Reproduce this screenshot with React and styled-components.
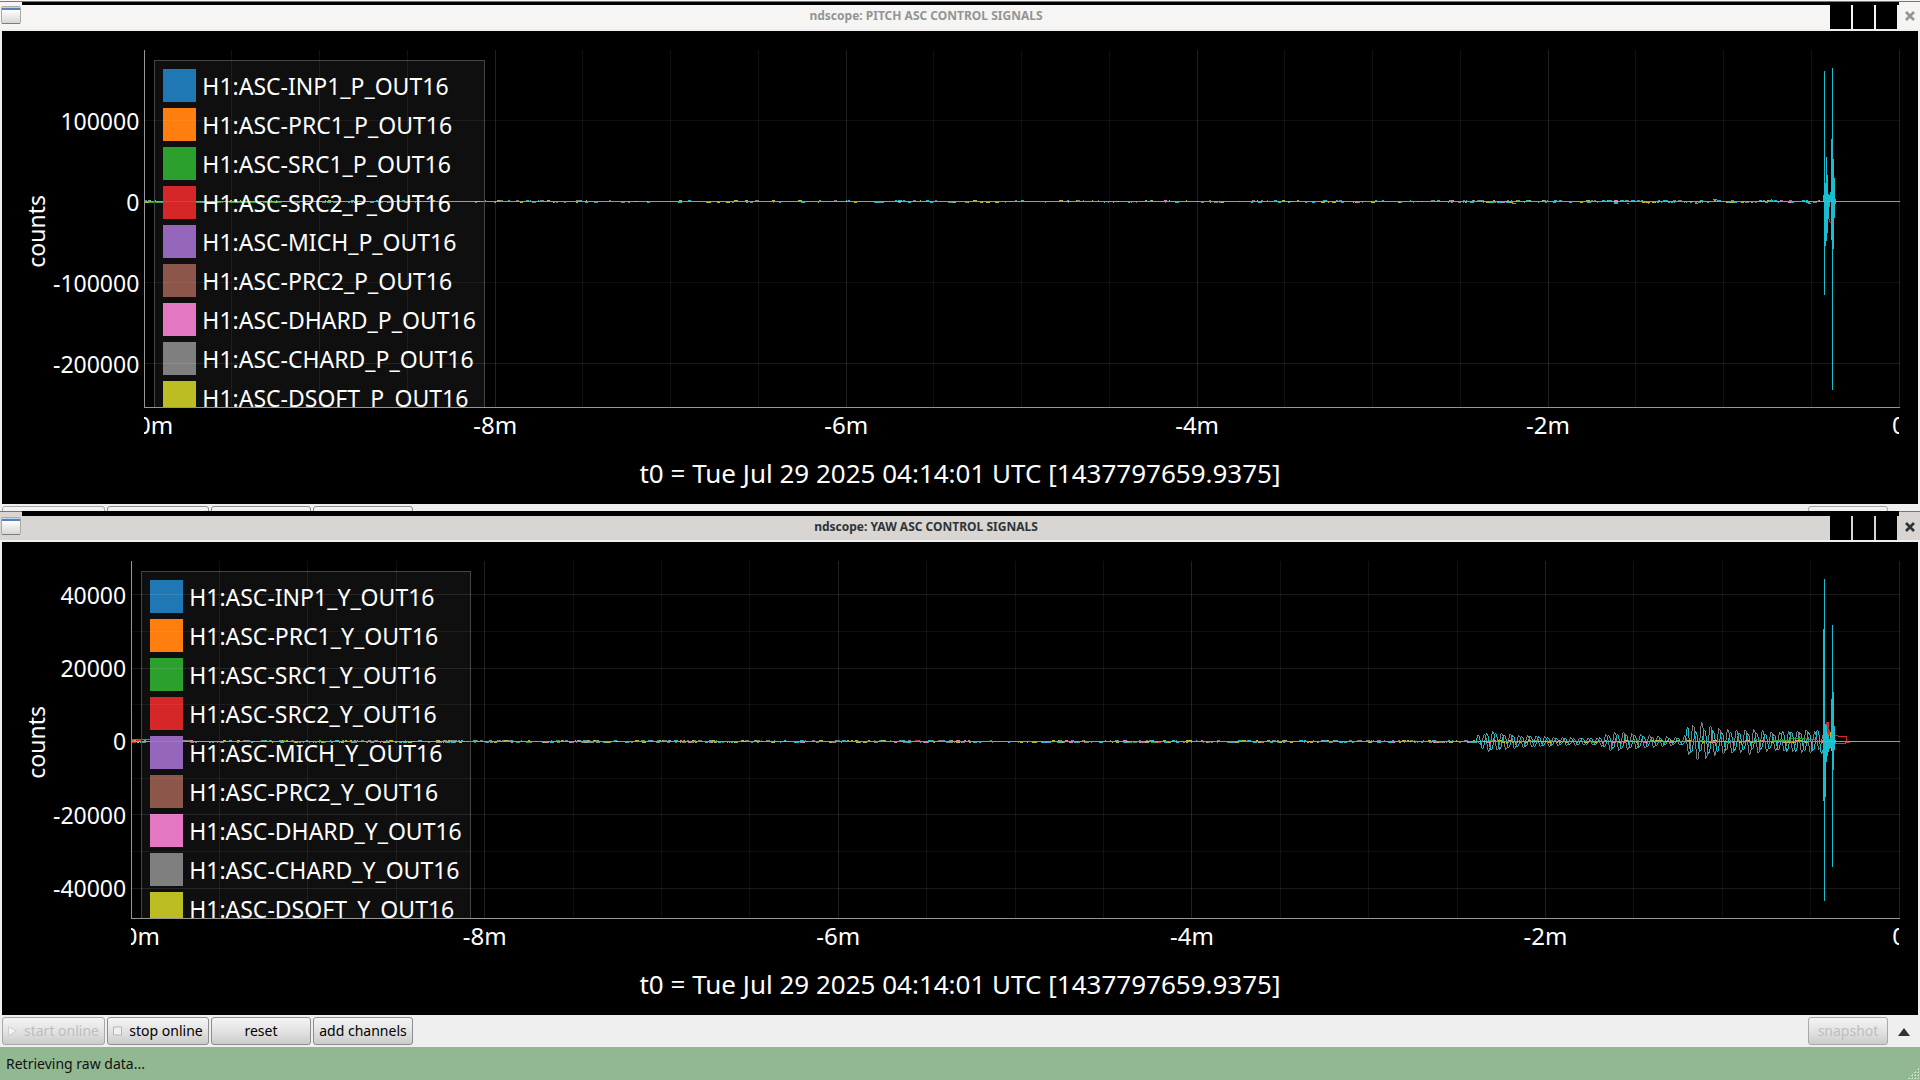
import React from 'react';
import styled, { createGlobalStyle, css } from 'styled-components';

const colors = {
  blue: '#1f77b4',
  orange: '#ff7f0e',
  green: '#2ca02c',
  red: '#d62728',
  purple: '#9467bd',
  brown: '#8c564b',
  pink: '#e377c2',
  gray: '#7f7f7f',
  olive: '#bcbd22',
  cyan: '#17becf',
};

const channels = [
  ['INP1', colors.blue],
  ['PRC1', colors.orange],
  ['SRC1', colors.green],
  ['SRC2', colors.red],
  ['MICH', colors.purple],
  ['PRC2', colors.brown],
  ['DHARD', colors.pink],
  ['CHARD', colors.gray],
  ['DSOFT', colors.olive],
];

const GlobalStyle = createGlobalStyle`
  * {
    box-sizing: border-box;
  }
  body {
    margin: 0;
    background: #000;
    font-family: 'Noto Sans', sans-serif;
  }
`;

const StyledDesktop = styled.main`
  display: flex;
  flex-direction: column;
  min-height: 100vh;
  overflow: hidden;
`;
const StyledWindow = styled.section`
  --bar: ${({ $active }) => ($active ? '#d9d5d2' : '#f6f5f4')};
  --ink: ${({ $active }) => ($active ? '#2e3436' : '#929595')};
  background: #efefef;
  ${({ $covered }) => $covered && css`margin-bottom: -58px;`};
  ${({ $active }) => $active && css`z-index: 1;`};
`;
const StyledStrip = styled.div`
  display: flex;
  height: 5px;
  ${({ $active }) => !$active && css`border-top: 1px solid #f6f5f4;`};
`;
const StyledCorner = styled.div`
  width: ${({ $width }) => $width}px;
  background: var(--bar);
  border-top: 1px solid #777;
`;
const StyledEdge = styled.div`
  flex: 1;
  background: #000;
  border-top: 1px solid ${({ $active }) => ($active ? '#000' : '#777')};
`;
const StyledTitleBar = styled.header`
  display: flex;
  align-items: stretch;
  height: 26px;
  background: var(--bar);
  border-bottom: 2px solid #efefef;
`;
const StyledWindowIcon = styled.svg`
  width: 20px;
  height: 18px;
  margin: 1px;
`;
const StyledTitle = styled.h1`
  flex: 1;
  margin: 0;
  color: var(--ink);
  font-size: 12px;
  font-weight: 700;
  line-height: 21px;
  text-align: center;
`;
const StyledWindowButtons = styled.div`
  display: flex;
  gap: 2px;
`;
const StyledWindowButton = styled.button`
  width: 21px;
  padding: 0;
  border: 0;
  background: ${({ $plain }) => ($plain ? 'none' : '#000')};
  svg {
    display: block;
    width: 10px;
    height: 10px;
    margin: 0 5px 3px 6px;
    stroke: var(--ink);
  }
`;
const StyledPlot = styled.div`
  display: grid;
  grid-template-columns: 51px auto 1fr;
  grid-template-rows: 1fr 33px 63px;
  height: calc((100vh - 134px) / 2);
  margin: 0 2px;
  padding: 19px 18px 0 0;
  background: #000;
  color: #fff;
  font-size: 23px;
  line-height: 33px;
`;
const StyledAxisName = styled.div`
  justify-self: end;
  align-self: center;
  margin-right: 5px;
  padding-bottom: 4px;
  writing-mode: vertical-rl;
  transform: rotate(180deg);
  line-height: 24px;
`;
const StyledYTicks = styled.div`
  display: grid;
  grid-template-rows: ${({ $rows }) => $rows};
  padding-right: 5px;
`;
const StyledYTick = styled.div`
  display: flex;
  align-items: center;
  justify-content: flex-end;
  align-self: end;
  height: 0;
`;
const StyledXTicks = styled.div`
  grid-column: 3;
  display: flex;
  justify-content: space-between;
  margin-right: 1px;
  overflow: hidden;
  font-size: 24px;
`;
const StyledXTick = styled.div`
  display: flex;
  justify-content: center;
  width: 0;
  white-space: nowrap;
`;
const StyledPlotTitle = styled.div`
  grid-column: 1 / -1;
  padding-left: 18px;
  padding-top: 14px;
  font-size: 26px;
  line-height: 36px;
  text-align: center;
`;
const StyledView = styled.div`
  display: grid;
  grid-template: minmax(0, 1fr) / minmax(0, 1fr);
  min-height: 0;
  overflow: hidden;
  border-left: 1px solid #969696;
  border-bottom: 1px solid #969696;
  > * {
    grid-area: 1 / 1;
  }
`;
const StyledCanvas = styled.svg`
  width: 100%;
  height: 100%;
  shape-rendering: crispEdges;
  pointer-events: none;
`;
const StyledLegend = styled.ul`
  justify-self: start;
  align-self: start;
  display: flex;
  flex-direction: column;
  gap: 6px;
  margin: 10px 9px;
  padding: 8px;
  list-style: none;
  white-space: nowrap;
  background: rgba(255, 255, 255, 0.06);
  border: 1px solid #444;
`;
const StyledLegendItem = styled.li`
  display: flex;
  gap: 6px;
  height: 33px;
  line-height: 35px;
`;
const StyledSwatch = styled.span`
  width: 33px;
  height: 33px;
  background: ${({ $color }) => $color};
`;
const StyledToolbar = styled.div`
  display: flex;
  align-items: center;
  gap: 2px;
  height: 32px;
  padding: 0 10px 0 2px;
`;
const StyledButton = styled.button`
  display: flex;
  align-items: center;
  justify-content: center;
  gap: 7px;
  width: ${({ $width }) => $width}px;
  height: 28px;
  padding: 0;
  border: 1px solid #8e8e8e;
  border-radius: 3px;
  background: linear-gradient(#f4f4f4, #e3e3e3 50%, #cbcbcb);
  color: #000;
  font-family: inherit;
  font-size: 14px;
  line-height: 20px;
  white-space: nowrap;
  &:disabled {
    border-color: #a8a8a8;
    color: #bebebe;
  }
  svg {
    width: 9px;
    height: 10px;
  }
`;
const StyledExpand = styled.button`
  width: 12px;
  height: 28px;
  margin-left: 8px;
  padding: 0;
  border: 0;
  background: none;
  svg {
    display: block;
    width: 12px;
    height: 8px;
    margin-top: 2px;
  }
`;
const StyledSpacer = styled.div`
  flex: 1;
`;
const StyledStatus = styled.footer`
  display: flex;
  align-items: center;
  justify-content: space-between;
  height: 33px;
  padding-left: 6px;
  background: #92b892;
  color: #111;
  font-size: 14px;
  line-height: 20px;
  svg {
    align-self: flex-end;
    width: 13px;
    height: 13px;
  }
`;

// small deterministic generator, so the traces look the same on every render
const random = seed => {
  let s = seed;
  return () => {
    s = (s * 16807) % 2147483647;
    return s / 2147483647;
  };
};

const lerp = (points, x) => {
  const i = points.findIndex(p => p[0] > x);
  if (i < 1) {
    return i === 0 ? points[0][1] : points[points.length - 1][1];
  }
  const [x0, y0] = points[i - 1];
  const [x1, y1] = points[i];
  return y0 + ((y1 - y0) * (x - x0)) / (x1 - x0);
};

// one pixel flecks just above and below the zero line
const noise = (seed, color, end, zero, density) => {
  const rnd = random(seed);
  let d = '';
  for (let x = 0; x < end; x += 1) {
    if (rnd() < density(x)) {
      const w = 1 + Math.floor(rnd() * 4);
      const r = rnd();
      const y = zero + (r < 0.35 ? -1 : r < 0.6 ? 0 : 1);
      d += `M${x} ${y}h${w}v1h-${w}z`;
      x += w;
    }
  }
  return { d, color };
};

const columns = (color, list) => ({
  color,
  d: list.map(([x, top, bottom]) => `M${x} ${top}h1V${bottom}h-1z`).join(''),
});

// every column spans from the previous sample to the current one
const wave = (color, start, end, zero, period, phase, envelope) => {
  const at = x => Math.round(zero - Math.sin(((x - start) / period) * 2 * Math.PI + phase) * lerp(envelope, x));
  const list = [];
  for (let x = start; x <= end; x += 1) {
    const from = at(x - 1);
    const to = at(x);
    list.push(from < to ? [x, from + 1, to + 1] : [x, to, Math.max(from, to + 1)]);
  }
  return columns(color, list);
};

const pitch = {
  letter: 'P',
  title: 'ndscope: PITCH ASC CONTROL SIGNALS',
  width: 1755,
  rows: '71fr 81fr 81fr 81fr 43fr',
  yTicks: ['100000', '0', '-100000', '-200000'],
  gridY: [[70, 1], [151, 2], [232, 1], [313, 2]],
  traces: [
    { color: colors.green, d: 'M0 151h18v2h-18zM50 152h26v1h-26zM84 152h30v1h-30zM118 152h18v1h-18z' },
    noise(11, colors.gray, 1680, 151, x => (x > 1300 ? 0.14 : 0.1)),
    noise(29, colors.pink, 1680, 151, x => (x > 1500 ? 0.02 : 0.003)),
    noise(47, colors.cyan, 1680, 151, x => (x > 1300 ? 0.3 : 0.09)),
    noise(53, colors.cyan, 1680, 150, x => (x > 1500 ? 0.06 : 0)),
    noise(71, colors.cyan, 1680, 152, x => (x > 1300 ? 0.05 : 0)),
    { color: colors.cyan, d: 'M0 151h1755v1h-1755z' },
    noise(83, colors.olive, 1680, 151, x => (x > 1300 ? 0.13 : 0.07)),
    { color: colors.red, d: 'M1684 169h1v3h-1zM1685 172h1v1h-1z' },
    columns(colors.cyan, [
      [1678, 145, 152], [1679, 21, 245], [1680, 133, 196], [1681, 107, 191], [1682, 125, 183],
      [1683, 144, 169], [1684, 145, 157], [1685, 142, 152], [1686, 89, 190], [1687, 18, 340],
      [1688, 109, 199], [1689, 128, 168], [1690, 149, 154],
    ]),
  ],
};

const yawEnd = 1692;
const yaw = {
  letter: 'Y',
  title: 'ndscope: YAW ASC CONTROL SIGNALS',
  width: 1768,
  rows: '34fr 73fr 73fr 74fr 73fr 30fr',
  yTicks: ['40000', '20000', '0', '-20000', '-40000'],
  gridY: [[33, 2], [70, 1], [107, 2], [143, 1], [180, 2], [217, 1], [253, 2], [290, 1], [327, 2]],
  traces: [
    { color: colors.green, d: 'M0 178h18v1h-18zM52 179h6v1h-6z' },
    { color: colors.red, d: 'M0 179h10v1h-10z' },
    noise(13, colors.gray, 1344, 180, () => 0.2),
    noise(31, colors.pink, 1344, 180, () => 0.06),
    noise(37, colors.red, 1344, 180, () => 0.01),
    noise(43, colors.green, 1344, 180, () => 0.05),
    noise(59, colors.olive, 1344, 180, () => 0.12),
    { color: colors.cyan, d: 'M0 180h1768v1h-1768z' },
    noise(61, colors.cyan, 1344, 180, () => 0.14),
    noise(97, colors.olive, 1344, 180, () => 0.04),
    noise(101, colors.gray, 1344, 180, () => 0.06),
    wave(colors.gray, 1346, yawEnd, 180, 8.7, 3.9, [
      [1346, 1], [1352, 8], [1358, 11], [1364, 9], [1390, 6], [1430, 4], [1465, 3], [1478, 9], [1490, 9],
      [1530, 5], [1550, 3], [1557, 15], [1567, 20], [1580, 14], [1605, 11], [1618, 13], [1640, 9],
      [1660, 10], [1675, 12], [1692, 6],
    ]),
    wave(colors.cyan, 1344, yawEnd, 180, 8.7, 0.6, [
      [1344, 6], [1360, 9], [1375, 6], [1400, 5], [1430, 3], [1465, 3], [1478, 7], [1495, 7], [1530, 3],
      [1552, 3], [1555, 17], [1560, 9], [1575, 12], [1590, 9], [1630, 8], [1640, 7], [1650, 10], [1680, 9],
      [1688, 13], [1692, 11],
    ]),
    noise(19, colors.pink, yawEnd, 180, x => (x > 1344 ? 0.12 : 0)),
    noise(67, colors.green, yawEnd, 180, x => (x > 1344 ? 0.1 : 0)),
    noise(73, colors.olive, yawEnd, 180, x => (x > 1344 ? 0.22 : 0)),
    { color: colors.green, d: 'M1640 179h18v-2h16v1h10v1h-10v-1h-16v2h-18z' },
    { color: colors.red, d: 'M1694 161h3v8h1v6h-4zM1703 174h3v1h9v6h3v1h-4v-6h-8v-1h-3z' },
    { color: colors.brown, d: 'M1703 182h10v-1h3v1h-2v1h-11z' },
    columns(colors.cyan, [
      [1691, 68, 240], [1692, 18, 340], [1693, 163, 236], [1694, 164, 201], [1695, 172, 195],
      [1696, 174, 191], [1697, 178, 188], [1698, 177, 187], [1699, 138, 190], [1700, 64, 306],
      [1701, 131, 209], [1702, 165, 189], [1703, 179, 182],
    ]),
    columns(colors.olive, [[1698, 171, 177], [1699, 186, 190]]),
  ],
};

const WindowIcon = () => (
  <StyledWindowIcon viewBox="0 0 20 18" aria-hidden="true">
    <defs>
      <linearGradient id="pane" x1="0" y1="0" x2="0" y2="1">
        <stop offset="0.2" stopColor="#ffffff" />
        <stop offset="1" stopColor="#d3d7cf" />
      </linearGradient>
    </defs>
    <rect x="0.5" y="0.5" width="19" height="17" rx="1" fill="url(#pane)" stroke="#a9aaa6" />
    <path d="M1 1h18v1H1z" fill="#c5d2e3" />
    <path d="M1 2h18v2H1z" fill="#5a7fb5" />
    <path d="M1 17h18v1H1z" fill="#7c7c7c" />
  </StyledWindowIcon>
);

const Scope = ({ letter, width, rows, yTicks, gridY, traces }) => (
  <StyledPlot>
    <StyledAxisName>counts</StyledAxisName>
    <StyledYTicks $rows={rows}>
      {yTicks.map(tick => (
        <StyledYTick key={tick}>{tick}</StyledYTick>
      ))}
    </StyledYTicks>
    <StyledView>
      <StyledCanvas viewBox={`0 0 ${width} 357`} preserveAspectRatio="none" aria-hidden="true">
        {traces.map(({ d, color }, i) => (
          <path key={i} d={d} fill={color} />
        ))}
      </StyledCanvas>
      <StyledLegend>
        {channels.map(([name, color]) => (
          <StyledLegendItem key={name}>
            <StyledSwatch $color={color} />
            {`H1:ASC-${name}_${letter}_OUT16`}
          </StyledLegendItem>
        ))}
      </StyledLegend>
      <StyledCanvas viewBox={`0 0 ${width} 357`} preserveAspectRatio="none" aria-hidden="true">
        {Array.from({ length: 20 }, (_, i) => (
          <rect
            key={i}
            x={Math.floor(((i + 1) * width) / 20) - 1}
            width="1"
            height="357"
            fill="#fff"
            opacity={(i + 1) % 4 ? 0.065 : 0.13}
          />
        ))}
        {gridY.map(([y, level]) => (
          <rect key={y} y={y} width={width} height="1" fill="#fff" opacity={level === 2 ? 0.1 : 0.06} />
        ))}
      </StyledCanvas>
    </StyledView>
    <StyledXTicks>
      {['-10m', '-8m', '-6m', '-4m', '-2m', '0'].map(tick => (
        <StyledXTick key={tick}>{tick}</StyledXTick>
      ))}
    </StyledXTicks>
    <StyledPlotTitle>t0 = Tue Jul 29 2025 04:14:01 UTC [1437797659.9375]</StyledPlotTitle>
  </StyledPlot>
);

const Toolbar = () => (
  <StyledToolbar>
    <StyledButton $width={103} disabled>
      <svg viewBox="0 0 9 10" aria-hidden="true">
        <path d="M0.5 0.5L8.5 5L0.5 9.5z" fill="#f3f3f3" stroke="#cfcfcf" />
      </svg>
      start online
    </StyledButton>
    <StyledButton $width={102}>
      <svg viewBox="0 0 9 10" aria-hidden="true">
        <path d="M0.5 1h8v8h-8z" fill="#f0f0ec" stroke="#b5b5b0" />
      </svg>
      stop online
    </StyledButton>
    <StyledButton $width={100}>reset</StyledButton>
    <StyledButton $width={100}>add channels</StyledButton>
    <StyledSpacer />
    <StyledButton $width={80} disabled>
      snapshot
    </StyledButton>
    <StyledExpand aria-label="expand">
      <svg viewBox="0 0 12 8">
        <path d="M6 0L12 8H0z" fill="#333" />
      </svg>
    </StyledExpand>
  </StyledToolbar>
);

const Grip = () => (
  <svg viewBox="0 0 13 13" aria-hidden="true">
    {[0, 1, 2, 3].map(row =>
      Array.from({ length: row + 1 }, (_, i) => (
        <g key={`${row}-${i}`}>
          <rect x={10 - i * 3} y={1 + row * 3} width="2" height="2" fill="#c9dcc9" />
          <rect x={10 - i * 3} y={1 + row * 3} width="1" height="1" fill="#7f9f7f" />
        </g>
      ))
    )}
  </svg>
);

const ScopeWindow = ({ scope, active, covered }) => (
  <StyledWindow $active={active} $covered={covered}>
    <StyledStrip $active={active}>
      <StyledCorner $width={22} />
      <StyledEdge $active={active} />
      <StyledCorner $width={21} />
    </StyledStrip>
    <StyledTitleBar>
      <WindowIcon />
      <StyledTitle>{scope.title}</StyledTitle>
      <StyledWindowButtons>
        <StyledWindowButton aria-label="shade" />
        <StyledWindowButton aria-label="minimize" />
        <StyledWindowButton aria-label="maximize" />
        <StyledWindowButton $plain aria-label="close">
          <svg viewBox="0 0 10 10">
            <path d="M1 1L9 9M9 1L1 9" strokeWidth="2.6" />
          </svg>
        </StyledWindowButton>
      </StyledWindowButtons>
    </StyledTitleBar>
    <Scope {...scope} />
    <Toolbar />
    <StyledStatus>
      Retrieving raw data...
      <Grip />
    </StyledStatus>
  </StyledWindow>
);

const App = () => (
  <StyledDesktop>
    <GlobalStyle />
    <ScopeWindow scope={pitch} covered />
    <ScopeWindow scope={yaw} active />
  </StyledDesktop>
);

export default App;
